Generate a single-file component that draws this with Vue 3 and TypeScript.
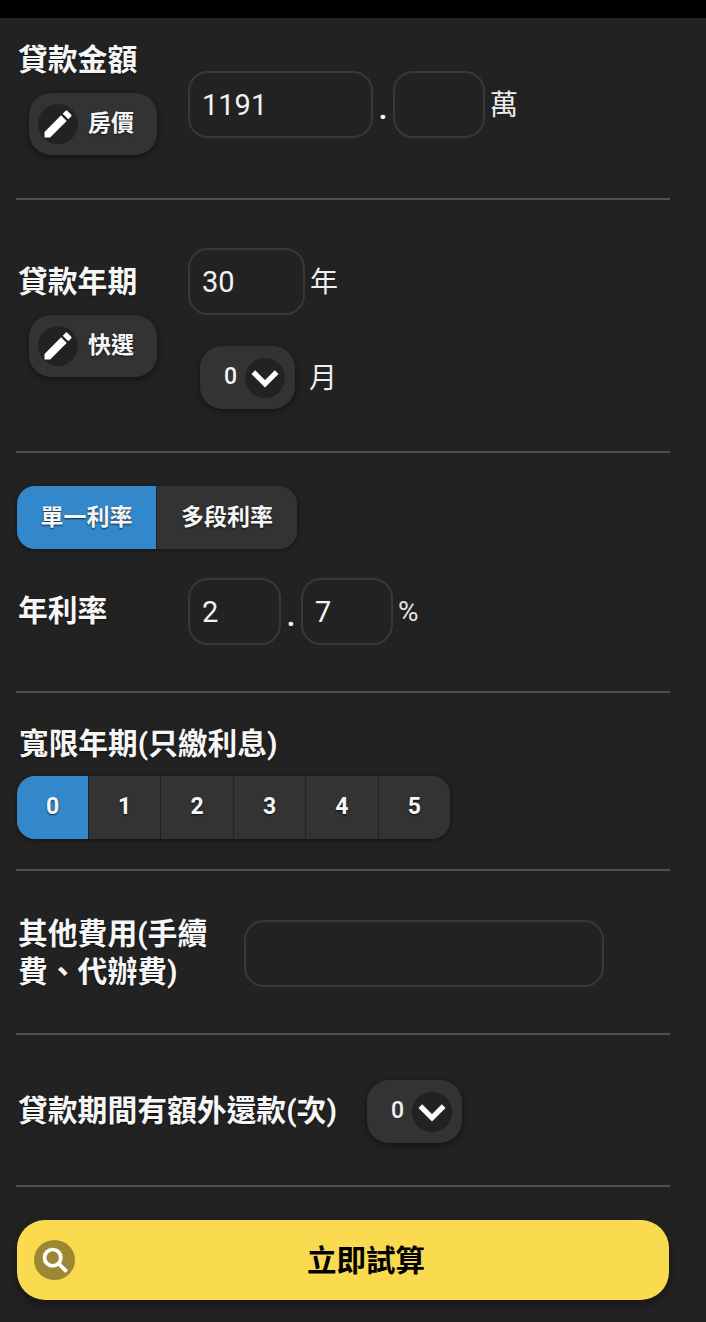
<script setup lang="ts">
const graceYears: number[] = [0, 1, 2, 3, 4, 5]
const pencil = 'M3 17.25V21h3.75L17.81 9.94l-3.75-3.75L3 17.25zM20.71 7.04c.39-.39.39-1.02 0-1.41l-2.34-2.34c-.39-.39-1.02-.39-1.41 0l-1.83 1.83 3.75 3.75 1.83-1.83z'
const chevron = 'M5 8.5 12 15.500 19 8.500'
</script>

<template>
  <div class="page">
    <div class="statusbar"></div>
    <main class="content">
      <section class="row sec-amount">
        <div class="left">
          <div class="label">貸款金額</div>
          <button class="pill" type="button">
            <span class="disc"><svg viewBox="0 0 24 24" class="pen"><path :d="pencil" /></svg></span>
            <span class="pill-text">房價</span>
          </button>
        </div>
        <div class="fields fields-amount">
          <input class="field w185" value="1191" />
          <span class="dot">.</span>
          <input class="field w92" />
          <span class="unit">萬</span>
        </div>
      </section>
      <hr />

      <section class="row sec-term">
        <div class="left">
          <div class="label">貸款年期</div>
          <button class="pill" type="button">
            <span class="disc"><svg viewBox="0 0 24 24" class="pen"><path :d="pencil" /></svg></span>
            <span class="pill-text">快選</span>
          </button>
        </div>
        <div class="term-right">
          <div class="fields">
            <input class="field w117" value="30" />
            <span class="unit">年</span>
          </div>
          <div class="fields month">
            <button class="select" type="button">
              <span class="select-value">0</span>
              <span class="disc"><svg viewBox="0 0 24 24" class="chev"><path :d="chevron" /></svg></span>
            </button>
            <span class="unit">月</span>
          </div>
        </div>
      </section>
      <hr />

      <section class="sec-rate">
        <div class="segment">
          <button class="seg active wide" type="button">單一利率</button>
          <button class="seg wide" type="button">多段利率</button>
        </div>
        <div class="row rate-row">
          <div class="label left">年利率</div>
          <div class="fields">
            <input class="field w93" value="2" />
            <span class="dot">.</span>
            <input class="field w92" value="7" />
            <span class="percent">%</span>
          </div>
        </div>
      </section>
      <hr />

      <section class="sec-grace">
        <div class="label grace-label">寬限年期(只繳利息)</div>
        <div class="segment">
          <button
            v-for="y in graceYears"
            :key="y"
            class="seg num"
            :class="{ active: y === 0 }"
            type="button"
          >{{ y }}</button>
        </div>
      </section>
      <hr />

      <section class="row sec-fee">
        <div class="label fee-label">其他費用(手續費、代辦費)</div>
        <input class="field w360" />
      </section>
      <hr />

      <section class="row sec-extra">
        <div class="label extra-label">貸款期間有額外還款(次)</div>
        <button class="select" type="button">
          <span class="select-value">0</span>
          <span class="disc"><svg viewBox="0 0 24 24" class="chev"><path :d="chevron" /></svg></span>
        </button>
      </section>
      <hr />

      <button class="submit" type="button">
        <span class="search-disc">
          <svg viewBox="0 0 24 24" class="search"><circle cx="10" cy="10" r="7" /><path d="m15.500 15.500 6.500 6.500" /></svg>
        </span>
        <span class="submit-text">立即試算</span>
      </button>
    </main>
  </div>
</template>

<style>
html, body { margin: 0; background: #222; }
</style>

<style scoped>
.page {
  width: 706px;
  height: 1322px;
  overflow: hidden;
  background: #222;
  color: #f4f4f4;
  font-family: Roboto, "Noto Sans CJK TC", sans-serif;
}
.statusbar { height: 18px; background: #000; }
.content { padding: 0 36px 0 16px; }
hr {
  margin: 0;
  border: 0;
  height: 2px;
  background: #505050;
}
.row { display: flex; align-items: flex-start; }
.left { width: 172px; flex: none; }
.label {
  box-sizing: border-box;
  font-size: 29.800px;
  line-height: 38px;
  font-weight: 700;
  padding-left: 2px;
  color: #f6f6f6;
  text-shadow: 0 1px 2px rgba(0, 0, 0, .5);
  white-space: nowrap;
}
.fields { display: flex; align-items: center; }
.field {
  box-sizing: border-box;
  height: 67px;
  padding: 0 12px;
  background: #222;
  border: 2px solid #383838;
  border-radius: 20px;
  color: #f2f2f2;
  font: 400 29px Roboto, sans-serif;
  outline: none;
}
.w185 { width: 185px; }
.w92 { width: 92px; }
.w93 { width: 93px; }
.w117 { width: 117px; }
.w360 { width: 360px; }
.dot {
  width: 20px;
  text-align: center;
  font: 700 29px/1 Roboto, sans-serif;
  align-self: flex-end;
  padding-bottom: 14px;
}
.unit { margin-left: 5px; font-size: 28px; line-height: 38px; color: #eee; margin-top: 2px; }
.percent { margin-left: 5px; font-size: 28px; color: #e4e4e4; }
.pill, .select, .seg, .submit { border: 0; cursor: pointer; font-family: inherit; }
.pill {
  display: flex;
  align-items: center;
  gap: 10px;
  width: 128px;
  height: 62px;
  margin: 14px 0 0 13px;
  padding: 0 0 0 9px;
  border-radius: 22px;
  background: #333;
  box-shadow: 0 2px 6px rgba(0, 0, 0, .5);
  color: #f6f6f6;
  font-size: 23px;
  font-weight: 700;
  text-shadow: 0 1px 2px rgba(0, 0, 0, .6);
}
.pill-text { padding-bottom: 7px; }
.disc {
  display: flex;
  align-items: center;
  justify-content: center;
  flex: none;
  width: 40px;
  height: 40px;
  border-radius: 50%;
  background: #222;
}
.pen { width: 36px; height: 36px; flex: none; fill: #fff; }
.chev { width: 40px; height: 40px; flex: none; fill: none; stroke: #fff; stroke-width: 3.200; }
.select {
  display: flex;
  align-items: center;
  justify-content: flex-end;
  gap: 8px;
  box-sizing: border-box;
  width: 95px;
  height: 63px;
  padding: 0 10px 0 0;
  border-radius: 22px;
  background: #333;
  box-shadow: 0 2px 6px rgba(0, 0, 0, .5);
  color: #f2f2f2;
  font-size: 23px;
  font-weight: 500;
}
.select-value { padding-bottom: 2px; }
.sec-amount { height: 180px; box-sizing: border-box; padding-top: 23px; }
.fields-amount { margin-top: 30px; }
.sec-term { height: 251px; box-sizing: border-box; padding-top: 63px; }
.term-right { margin-top: -15px; }
.month { margin: 31px 0 0 12px; }
.month .unit { margin-left: 14px; }
.sec-rate { height: 238px; box-sizing: border-box; padding-top: 33px; }
.segment { display: flex; width: fit-content; margin-left: 1px; border-radius: 18px; overflow: hidden; box-shadow: 0 1px 4px rgba(0, 0, 0, .5); }
.seg {
  height: 63px;
  background: #333;
  color: #f6f6f6;
  font-size: 23px;
  font-weight: 700;
  padding: 0 0 6px;
  text-shadow: 0 1px 2px rgba(0, 0, 0, .7);
  border-left: 1px solid #222;
}
.seg:first-child { border-left: 0; }
.seg.active { background: #38c; }
.wide { width: 141px; }
.wide:first-child { width: 139px; }
.num { width: 72.400px; padding-bottom: 2px; font-family: Roboto, sans-serif; }
.num:first-child { width: 71px; }
.rate-row { margin-top: 29px; }
.rate-row .label { margin-top: 14px; }
.sec-grace { height: 176px; box-sizing: border-box; padding-top: 32px; }
.grace-label { padding-left: 3px; font-size: 29.700px; margin-bottom: 13px; }
.sec-fee { height: 162px; box-sizing: border-box; padding-top: 49px; }
.fee-label { width: 228px; white-space: normal; flex: none; margin-top: -5px; }
.sec-extra { height: 150px; box-sizing: border-box; padding-top: 45px; }
.extra-label { width: 351px; flex: none; margin-top: 12px; }
.submit {
  display: flex;
  align-items: center;
  position: relative;
  justify-content: center;
  box-sizing: border-box;
  width: 652px;
  height: 80px;
  margin: 33px 0 0 1px;
  padding: 0 0 0 46px;
  border-radius: 28px;
  background: #fada4e;
  box-shadow: 0 4px 10px rgba(0, 0, 0, .4);
  color: #000;
  font-size: 29.500px;
  font-weight: 700;
}
.submit-text { padding-bottom: 4px; }
.search-disc {
  position: absolute;
  left: 17px;
  top: 20px;
  width: 41px;
  height: 40px;
  border-radius: 50%;
  background: #9c8832;
  display: flex;
  align-items: center;
  justify-content: center;
}
.search { width: 28px; height: 28px; fill: none; stroke: #fff; stroke-width: 3.200; }
</style>
